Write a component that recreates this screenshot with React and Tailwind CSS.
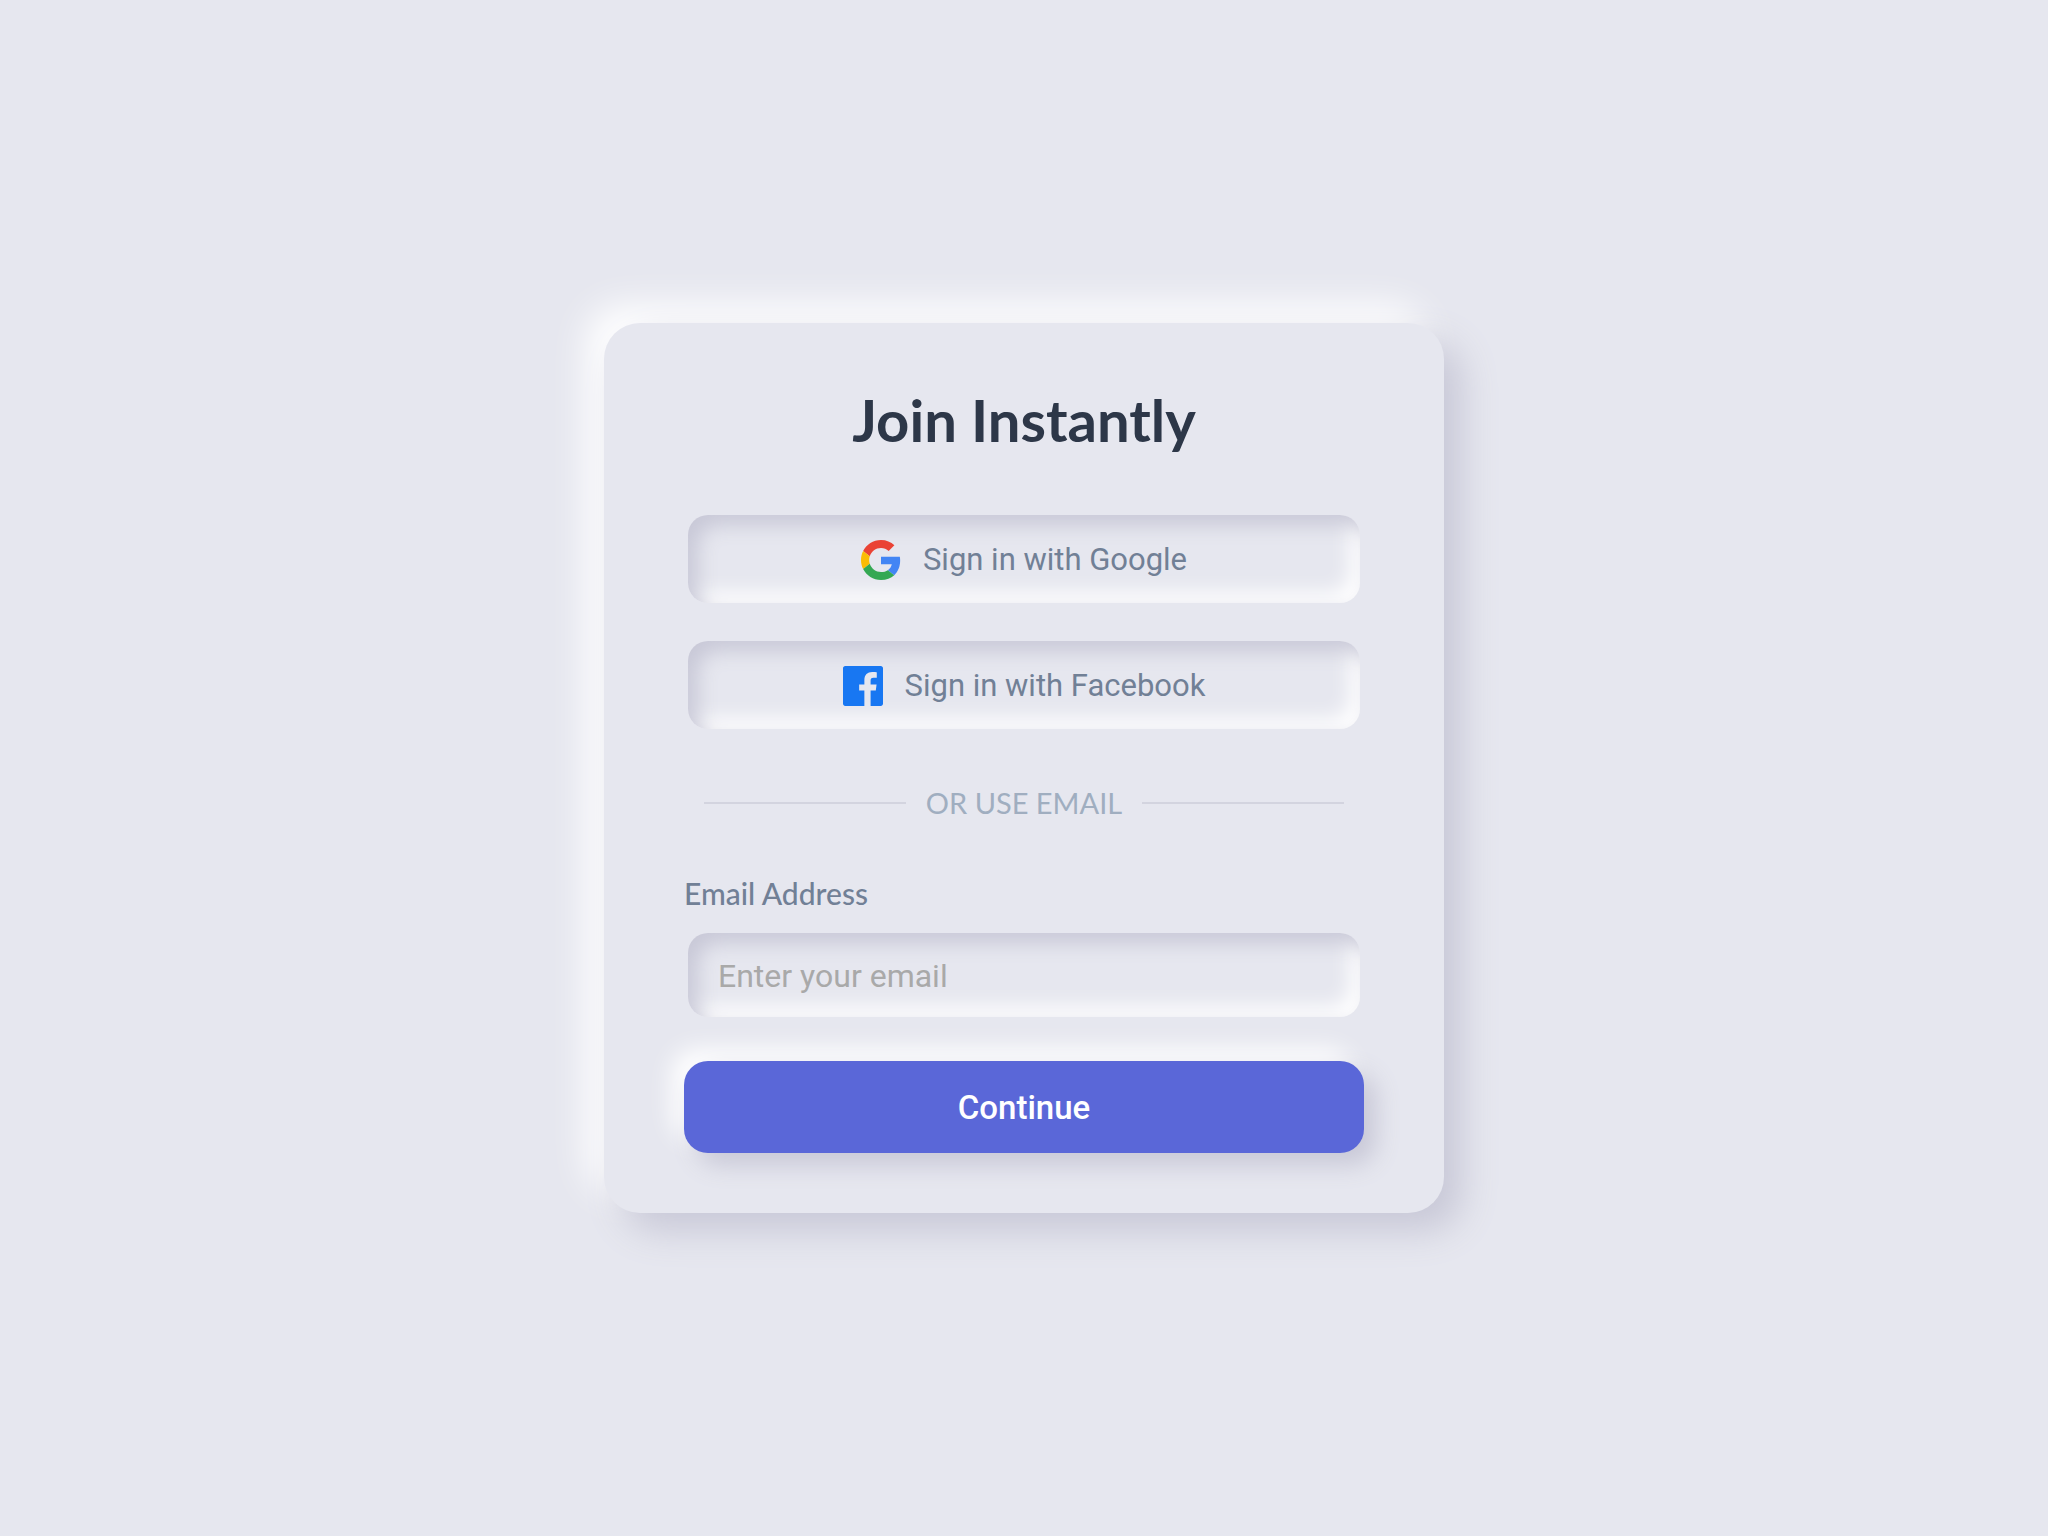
function GoogleIcon() {
  return (
    <svg viewBox="0 0 48 48" className="size-10 shrink-0" aria-hidden="true">
      <path fill="#EA4335" d="M24 9.5c3.54 0 6.71 1.22 9.21 3.6l6.85-6.85C35.9 2.38 30.47 0 24 0 14.62 0 6.51 5.38 2.56 13.22l7.98 6.19C12.43 13.72 17.74 9.5 24 9.5z" />
      <path fill="#4285F4" d="M46.98 24.55c0-1.57-.15-3.09-.38-4.55H24v9.02h12.94c-.58 2.96-2.26 5.48-4.78 7.18l7.73 6c4.51-4.18 7.09-10.36 7.09-17.65z" />
      <path fill="#FBBC05" d="M10.53 28.59c-.48-1.45-.76-2.99-.76-4.59s.27-3.14.76-4.59l-7.98-6.19C.92 16.46 0 20.12 0 24c0 3.88.92 7.54 2.56 10.78l7.97-6.19z" />
      <path fill="#34A853" d="M24 48c6.48 0 11.93-2.13 15.89-5.81l-7.73-6c-2.15 1.45-4.92 2.3-8.16 2.3-6.26 0-11.57-4.22-13.47-9.91l-7.98 6.19C6.51 42.62 14.62 48 24 48z" />
    </svg>
  );
}

function FacebookIcon() {
  return (
    <svg viewBox="0 0 24 24" className="size-10 shrink-0" aria-hidden="true">
      <path fill="#1877F2" d="M22.676 0H1.324C.593 0 0 .593 0 1.324v21.352C0 23.408.593 24 1.324 24h11.494v-9.294H9.689v-3.621h3.129V8.41c0-3.099 1.894-4.785 4.659-4.785 1.325 0 2.464.097 2.796.141v3.24h-1.921c-1.5 0-1.792.721-1.792 1.771v2.311h3.584l-.465 3.63H16.56V24h6.115c.733 0 1.325-.592 1.325-1.324V1.324C24 .593 23.408 0 22.676 0" />
    </svg>
  );
}

function SocialButton({ icon, children }) {
  return (
    <button
      type="button"
      className="flex h-[88px] w-full items-center justify-center gap-[22px] rounded-[20px] pt-0.5 font-[Roboto,sans-serif] text-[31px] leading-10 font-normal text-[#718096] shadow-[inset_10px_10px_20px_#c8c8d7,inset_-10px_-10px_20px_#ffffff]"
    >
      {icon}
      <span>{children}</span>
    </button>
  );
}

export default function App() {
  return (
    <main className="flex min-h-screen items-center justify-center bg-[#e6e7ef] font-[Lato,sans-serif]">
      <form
        onSubmit={(e) => e.preventDefault()}
        className="w-full max-w-[840px] rounded-[36px] bg-[#e6e7ef] px-20 pt-[60px] pb-[60px] shadow-[18px_18px_36px_#c8c8d7,-18px_-18px_36px_#ffffff]"
      >
        <h1 className="text-center text-[58px] leading-[74px] font-bold text-[#2d3748]">Join Instantly</h1>

        <div className="mt-[58px] flex flex-col gap-[38px] px-1">
          <SocialButton icon={<GoogleIcon />}>Sign in with Google</SocialButton>
          <SocialButton icon={<FacebookIcon />}>Sign in with Facebook</SocialButton>
        </div>

        <div className="mt-[54px] flex items-center gap-5 px-5 text-[29px] leading-10 text-[#a0aec0]">
          <span className="h-0.5 flex-1 bg-[#d3d4df]" />
          <span>OR USE EMAIL</span>
          <span className="h-0.5 flex-1 bg-[#d3d4df]" />
        </div>

        <label htmlFor="email" className="mt-[50px] block text-[30px] leading-10 font-medium text-[#718096]">
          Email Address
        </label>
        <div className="mt-5 px-1">
          <input
            id="email"
            type="email"
            placeholder="Enter your email"
            className="h-[84px] w-full rounded-[20px] bg-transparent px-[30px] pt-0.5 font-[Roboto,sans-serif] text-[32px] text-[#2d3748] shadow-[inset_10px_10px_20px_#c8c8d7,inset_-10px_-10px_20px_#ffffff] outline-none placeholder:text-[#a9a9a9]"
          />
        </div>

        <button
          type="submit"
          className="mt-11 block h-[92px] w-full rounded-[24px] bg-[#5a67d8] pt-0.5 font-[Roboto,sans-serif] text-[33px] font-medium text-white shadow-[12px_12px_24px_#c8c8d7,-12px_-12px_24px_#ffffff]"
        >
          Continue
        </button>
      </form>
    </main>
  );
}
